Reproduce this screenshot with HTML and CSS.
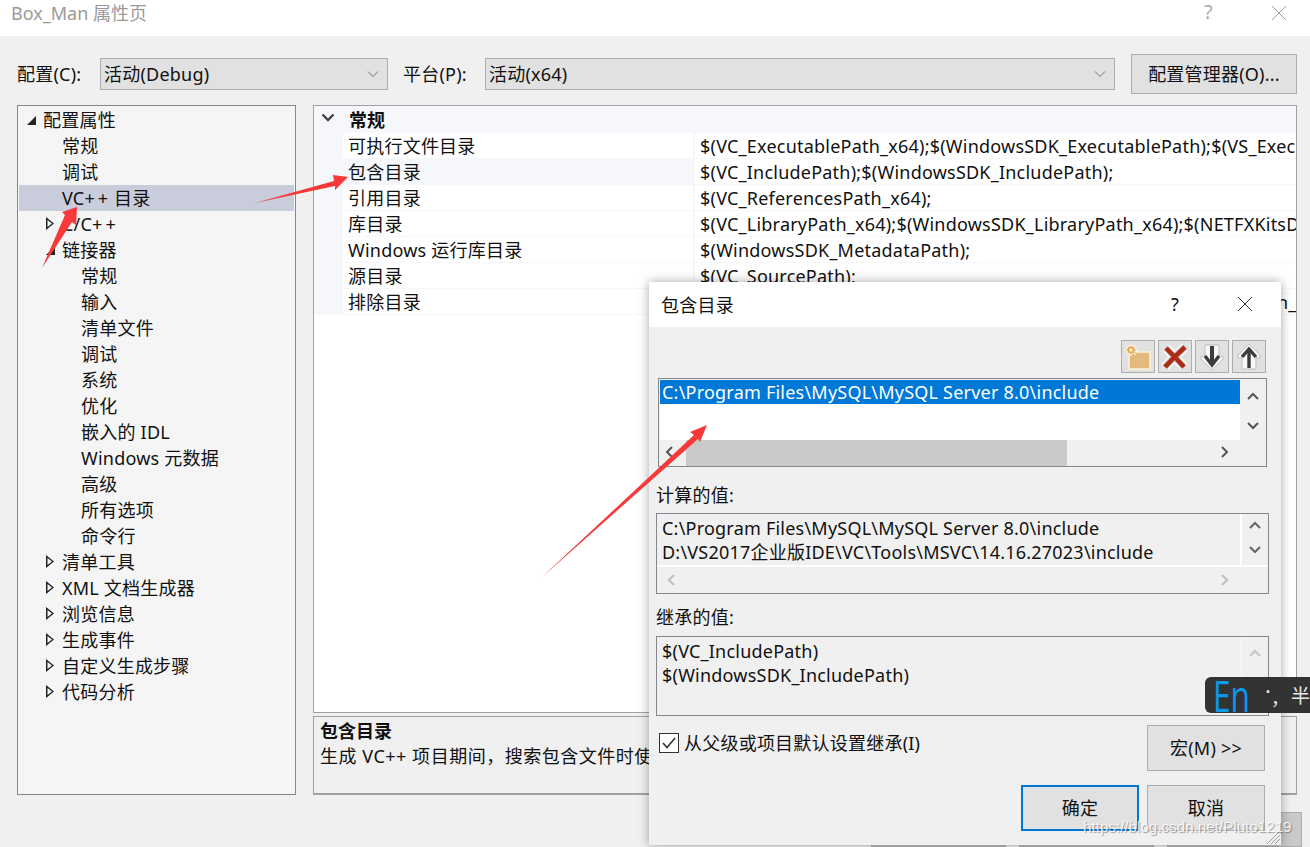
FILE: index.html
```html
<!DOCTYPE html>
<html lang="zh-CN">
<head>
<meta charset="utf-8">
<title>Box_Man 属性页</title>
<link rel="stylesheet" href="styles.css">
</head>
<body>
<div class="window">
  <header class="titlebar">
    <span class="title">Box_Man 属性页</span>
    <span class="help">?</span>
    <svg class="close" width="18" height="18" viewBox="0 0 18 18"><path d="M2 2 L16 16 M16 2 L2 16" stroke="#a0a0a0" fill="none"/></svg>
  </header>
  <div class="config">
    <span class="cfg-label first">配置(C):</span>
    <div class="select sel-a"><span>活动(Debug)</span><svg width="12" height="8" viewBox="0 0 12 8"><path d="M1 1.5 L6 6.5 L11 1.5" stroke="#777" fill="none"/></svg></div>
    <span class="cfg-label second">平台(P):</span>
    <div class="select sel-b"><span>活动(x64)</span><svg width="12" height="8" viewBox="0 0 12 8"><path d="M1 1.5 L6 6.5 L11 1.5" stroke="#777" fill="none"/></svg></div>
    <div class="btn cfg-btn">配置管理器(O)...</div>
  </div>
  <div class="main">
    <nav class="tree">
      <div class="node lvl0"><i class="tw open"></i>配置属性</div>
      <div class="node lvl1">常规</div>
      <div class="node lvl1">调试</div>
      <div class="node lvl1 sel">VC<span class="plus">++</span> 目录</div>
      <div class="node lvl1"><i class="tw closed"></i>C/C<span class="plus">++</span></div>
      <div class="node lvl1"><i class="tw open"></i>链接器</div>
      <div class="node lvl2">常规</div>
      <div class="node lvl2">输入</div>
      <div class="node lvl2">清单文件</div>
      <div class="node lvl2">调试</div>
      <div class="node lvl2">系统</div>
      <div class="node lvl2">优化</div>
      <div class="node lvl2">嵌入的 IDL</div>
      <div class="node lvl2">Windows 元数据</div>
      <div class="node lvl2">高级</div>
      <div class="node lvl2">所有选项</div>
      <div class="node lvl2">命令行</div>
      <div class="node lvl1"><i class="tw closed"></i>清单工具</div>
      <div class="node lvl1"><i class="tw closed"></i>XML 文档生成器</div>
      <div class="node lvl1"><i class="tw closed"></i>浏览信息</div>
      <div class="node lvl1"><i class="tw closed"></i>生成事件</div>
      <div class="node lvl1"><i class="tw closed"></i>自定义生成步骤</div>
      <div class="node lvl1"><i class="tw closed"></i>代码分析</div>
    </nav>
    <section class="right">
      <div class="grid">
        <div class="group">
          <svg class="chev" width="14" height="10" viewBox="0 0 14 10"><path d="M1.5 1.5 L7 7 L12.5 1.5" stroke="#444" stroke-width="2.4" fill="none"/></svg>
          <b>常规</b>
        </div>
        <div class="prop"><div class="pname">可执行文件目录</div><div class="pval">$(VC_ExecutablePath_x64);$(WindowsSDK_ExecutablePath);$(VS_ExecutablePath);$(MSBuild_ExecutablePath);</div></div>
        <div class="prop hover"><div class="pname">包含目录</div><div class="pval">$(VC_IncludePath);$(WindowsSDK_IncludePath);</div></div>
        <div class="prop"><div class="pname">引用目录</div><div class="pval">$(VC_ReferencesPath_x64);</div></div>
        <div class="prop"><div class="pname">库目录</div><div class="pval">$(VC_LibraryPath_x64);$(WindowsSDK_LibraryPath_x64);$(NETFXKitsDir)Lib\um\x64</div></div>
        <div class="prop"><div class="pname">Windows 运行库目录</div><div class="pval">$(WindowsSDK_MetadataPath);</div></div>
        <div class="prop"><div class="pname">源目录</div><div class="pval">$(VC_SourcePath);</div></div>
        <div class="prop"><div class="pname">排除目录</div><div class="pval">$(CommonExcludePath);$(VC_ExecutablePath_x64);$(VC_LibraryPath_x64);</div></div>
      </div>
      <div class="desc">
        <b>包含目录</b>
        <p>生成 VC++ 项目期间，搜索包含文件时使用的路径。</p>
      </div>
    </section>
  </div>
  <footer class="footer">
    <div class="foot-btn"></div>
    <div class="foot-btn"></div>
    <div class="foot-btn"></div>
  </footer>
</div>

<svg class="arrows" width="1310" height="847" viewBox="0 0 1310 847">
  <path fill="#f8393a" d="M255 203 L334 181 L333 175 L348 177 L335 190 L335 186 Z"/>
  <path fill="#f8393a" d="M42 268 L65 215 L62 212 L77 207 L76 225 L72 222 Z"/>
</svg>

<div class="dialog">
  <div class="dlg-title">
    <span>包含目录</span>
    <span class="dlg-help">?</span>
    <svg class="dlg-close" width="16" height="16" viewBox="0 0 16 16"><path d="M1 1 L15 15 M15 1 L1 15" stroke="#333" fill="none"/></svg>
  </div>
  <div class="dlg-body">
    <div class="tools">
      <div class="tool">
        <svg width="30" height="30" viewBox="0 0 30 30"><path d="M6 8 H12 L14 10 H27 V27 H6 Z" fill="#e3bb7e" stroke="#fdf3e0" stroke-width="1.5"/><path d="M8 2 L9.4 5 L12.5 3.5 L11.2 6.6 L14.5 8 L11.2 9.4 L12.5 12.5 L9.4 11 L8 14 L6.6 11 L3.5 12.5 L4.8 9.4 L1.5 8 L4.8 6.6 L3.5 3.5 L6.6 5 Z" fill="#e8a23a" stroke="#fff" stroke-width=".8"/><circle cx="8" cy="8" r="1.8" fill="#fff3d8"/></svg>
      </div>
      <div class="tool">
        <svg width="30" height="30" viewBox="0 0 30 30"><path d="M6 6 Q15 15 24 25 M25 5 Q14 15 5 25" stroke="#fff" stroke-width="9" fill="none"/><path d="M6 6 Q15 15 24 25 M25 5 Q14 15 5 25" stroke="#c8c8c8" stroke-width="6.5" fill="none"/><path d="M6 6 Q15 15 24 25 M25 5 Q14 15 5 25" stroke="#ad2a12" stroke-width="4.5" fill="none"/></svg>
      </div>
      <div class="tool">
        <svg width="30" height="30" viewBox="0 0 30 30"><path d="M8 3 H22 V14 H26 V17 L15 28 L4 17 V14 H8 Z" fill="#f8f8f8" stroke="#bdbdbd"/><path d="M15 4 V22" stroke="#3c3c3c" stroke-width="4" fill="none"/><path d="M8 14 L15 23 L22 14" stroke="#3c3c3c" stroke-width="3.4" fill="none"/></svg>
      </div>
      <div class="tool">
        <svg width="30" height="30" viewBox="0 0 30 30"><path d="M15 2 L26 13 V16 H22 V27 H8 V16 H4 V13 Z" fill="#f8f8f8" stroke="#bdbdbd"/><path d="M15 8 V26" stroke="#3c3c3c" stroke-width="3.4" fill="none"/><path d="M8 15 L15 7 L22 15" stroke="#3c3c3c" stroke-width="3.4" fill="none"/></svg>
      </div>
    </div>
    <div class="listbox">
      <div class="list-main">
        <div class="list-rows"><div class="list-sel">C:\Program Files\MySQL\MySQL Server 8.0\include</div></div>
        <div class="vbar">
          <svg width="14" height="10" viewBox="0 0 14 10"><path d="M2 8 L7 3 L12 8" stroke="#555" stroke-width="2" fill="none"/></svg>
          <svg width="14" height="10" viewBox="0 0 14 10"><path d="M2 2 L7 7 L12 2" stroke="#555" stroke-width="2" fill="none"/></svg>
        </div>
      </div>
      <div class="hbar">
        <svg class="hleft" width="10" height="14" viewBox="0 0 10 14"><path d="M8 2 L3 7 L8 12" stroke="#555" stroke-width="2" fill="none"/></svg>
        <div class="thumb"></div>
        <svg class="hright" width="10" height="14" viewBox="0 0 10 14"><path d="M2 2 L7 7 L2 12" stroke="#555" stroke-width="2" fill="none"/></svg>
      </div>
    </div>
    <div class="sec-label">计算的值:</div>
    <div class="valbox computed">
      <div class="val-main">
        <div class="val-text">C:\Program Files\MySQL\MySQL Server 8.0\include<br>D:\VS2017企业版IDE\VC\Tools\MSVC\14.16.27023\include</div>
        <div class="vbar small">
          <svg width="14" height="10" viewBox="0 0 14 10"><path d="M2 8 L7 3 L12 8" stroke="#666" stroke-width="2" fill="none"/></svg>
          <svg width="14" height="10" viewBox="0 0 14 10"><path d="M2 2 L7 7 L12 2" stroke="#666" stroke-width="2" fill="none"/></svg>
        </div>
      </div>
      <div class="hbar2">
        <svg width="10" height="14" viewBox="0 0 10 14"><path d="M8 2 L3 7 L8 12" stroke="#c4c4c4" stroke-width="2.4" fill="none"/></svg>
        <svg width="10" height="14" viewBox="0 0 10 14"><path d="M2 2 L7 7 L2 12" stroke="#c4c4c4" stroke-width="2.4" fill="none"/></svg>
      </div>
    </div>
    <div class="sec-label second-sec">继承的值:</div>
    <div class="valbox inherited">
      <div class="val-text">$(VC_IncludePath)<br>$(WindowsSDK_IncludePath)</div>
      <div class="vbar small single">
        <svg width="14" height="10" viewBox="0 0 14 10"><path d="M2 8 L7 3 L12 8" stroke="#c8c8c8" stroke-width="2.4" fill="none"/></svg>
      </div>
    </div>
    <div class="inherit-row">
      <label class="check">
        <svg class="cb" width="20" height="20" viewBox="0 0 20 20"><rect x="0.5" y="0.5" width="19" height="19" fill="#fff" stroke="#333"/><path d="M4 10 L8 14.5 L16 5" stroke="#333" stroke-width="1.6" fill="none"/></svg>
        <span class="check-text">从父级或项目默认设置继承(I)</span>
      </label>
      <div class="btn dlg-btn">宏(M) &gt;&gt;</div>
    </div>
    <div class="dlg-actions">
      <div class="btn dlg-btn primary">确定</div>
      <div class="btn dlg-btn">取消</div>
    </div>
  </div>
  <svg class="grip" width="14" height="14" viewBox="0 0 14 14"><path d="M14 1 L1 14 M14 5 L5 14 M14 9 L9 14" stroke="#9a9a9a" fill="none"/></svg>
</div>

<svg class="arrows" width="1310" height="847" viewBox="0 0 1310 847">
  <path fill="#f8393a" d="M541 578 L694 435 L690 432 L707 425 L700 442 L698 439 Z"/>
</svg>

<div class="ime"><span class="ime-en">En</span><span class="ime-dot">·</span><span class="ime-comma">，</span><span class="ime-half">半</span></div>
<div class="watermark">https://blog.csdn.net/Pluto1219</div>
</body>
</html>
```
FILE: styles.css
```css
* { box-sizing: border-box; }
html, body { margin: 0; padding: 0; }
body {
  width: 1310px;
  height: 847px;
  overflow: hidden;
  position: relative;
  font-family: "Noto Sans", "Noto Sans CJK SC", sans-serif;
  font-size: 18px;
  letter-spacing: .22px;
  color: #111;
  background: #f0f0f0;
}
.window { width: 1310px; height: 847px; display: flex; flex-direction: column; }

.titlebar { height: 36px; background: #fff; display: flex; align-items: center; padding: 0 0 0 11px; position: relative; flex: none; }
.title { font-size: 18px; letter-spacing: 0; color: #9a9a9a; flex: 1; margin-top: -13px; }
.help { color: #aaa; font-size: 20px; margin-right: 57px; margin-top: -13px; }
.close { margin-right: 22px; margin-top: -11px; }

.config { display: flex; align-items: center; padding: 18px 0 0 17px; flex: none; }
.cfg-label { line-height: 32px; }
.first { width: 83px; }
.second { width: 82px; margin-left: 15px; }
.select { height: 32px; line-height: 30px; background: #e1e1e1; border: 1px solid #adadad; display: flex; align-items: center; justify-content: space-between; padding: 0 8px 0 3px; }
.sel-a { width: 288px; }
.sel-b { width: 630px; }
.btn { background: #e1e1e1; border: 1px solid #adadad; display: flex; align-items: center; justify-content: center; line-height: 24px; }
.cfg-btn { width: 166px; height: 40px; margin-left: 16px; }

.main { display: flex; gap: 17px; padding: 11px 0 0 17px; flex: none; }
.tree { width: 279px; height: 690px; background: #f5f5f5; border: 1px solid #828790; padding: 1px; }
.node { height: 26px; line-height: 26px; position: relative; white-space: nowrap; }
.plus { letter-spacing: 3px; margin-right: -2px; }
.lvl0 { padding-left: 24px; }
.lvl1 { padding-left: 43px; }
.lvl2 { padding-left: 62px; }
.sel { background: #c9ccda; }
.tw { position: absolute; top: 8px; width: 0; height: 0; }
.lvl0 .tw { left: 8px; }
.lvl1 .tw { left: 27px; }
.tw.open { top: 9px; border-style: solid; border-width: 0 0 9px 9px; border-color: transparent transparent #222 transparent; }
.tw.closed { width: 8px; height: 13px; top: 6px; background: linear-gradient(#222, #222); clip-path: polygon(0 0, 100% 50%, 0 100%, 0 0, 1.5px 3px, 1.5px calc(100% - 3px), calc(100% - 2px) 50%, 1.5px 3px); }

.right { width: 984px; display: flex; flex-direction: column; gap: 3px; }
.grid { height: 608px; background: #fff; border: 1px solid #a0a0a0; overflow: hidden; }
.group { height: 27px; background: #f5f7fb; display: flex; align-items: center; padding: 0 0 2px 7px; }
.group b { margin-left: 14px; font-weight: 700; letter-spacing: 0; }
.chev { flex: none; margin-top: -2px; }
.prop { height: 26px; display: flex; border-left: 29px solid #f5f7fb; border-bottom: 1px solid #f5f7fb; }
.pname { width: 352px; flex: none; padding-left: 5px; line-height: 26px; border-right: 2px solid #f5f7fb; white-space: nowrap; }
.pval { padding-left: 5px; line-height: 26px; white-space: nowrap; overflow: hidden; flex: 1; }
.hover, .hover .pname { background: #f5f7fb; }
.hover .pval { background: #fff; }
.desc { height: 79px; background: #f0f0f0; border: 1px solid #a0a0a0; border-bottom-width: 2px; padding: 2px 6px; line-height: 25px; }
.desc b { display: block; font-weight: 700; letter-spacing: 0; }
.desc p { margin: 0; white-space: nowrap; overflow: hidden; letter-spacing: .52px; }

.footer { display: flex; gap: 13px; justify-content: flex-end; padding: 17px 8px 0 0; flex: 1; }
.foot-btn { width: 135px; background: #c9c9c9; border: 1px solid #adadad; }

.arrows { position: absolute; left: 0; top: 0; pointer-events: none; }

.dialog { position: absolute; left: 649px; top: 282px; width: 632px; height: 563px; background: #f0f0f0; box-shadow: 0 0 10px rgba(0,0,0,.35); display: flex; flex-direction: column; }
.dlg-title { height: 45px; background: #fff; display: flex; align-items: center; padding: 0 0 2px 12px; position: relative; flex: none; }
.dlg-title span:first-child { flex: 1; }
.dlg-help { margin-right: 58px; font-size: 18px; }
.dlg-close { margin-right: 28px; }
.dlg-body { padding: 13px 12px 0 7px; flex: 1; display: flex; flex-direction: column; }
.tools { display: flex; justify-content: flex-end; gap: 3px; padding-right: 3px; }
.tool { width: 34px; height: 33px; background: #e1e1e1; border: 1px solid #adadad; display: flex; align-items: center; justify-content: center; }
.listbox { width: 609px; height: 89px; margin: 5px 0 0 2px; border: 1px solid #828790; padding: 1px 0 0 1px; display: flex; flex-direction: column; background: #f0f0f0; }
.list-main { display: flex; height: 60px; }
.list-rows { width: 580px; background: #fff; }
.list-sel { height: 24px; line-height: 24px; background: #0078d7; color: #fff; padding-left: 2px; white-space: nowrap; }
.vbar { flex: 1; display: flex; flex-direction: column; align-items: center; justify-content: space-between; padding: 11px 0 9px; }
.hbar { flex: 1; display: flex; align-items: center; position: relative; padding-left: 26px; }
.hleft { position: absolute; left: 4px; top: 5px; }
.thumb { width: 381px; height: 100%; background: #cacaca; }
.hright { position: absolute; right: 36px; top: 5px; }
.sec-label { line-height: 24px; margin-top: 16px; }
.second-sec { margin-top: 11px; }
.valbox { width: 613px; border: 1px solid #828790; margin-top: 6px; background: #f0f0f0; }
.computed { height: 81px; display: flex; flex-direction: column; }
.val-main { display: flex; height: 53px; border-bottom: 2px solid #fff; }
.val-text { flex: 1; padding: 2px 0 0 5px; line-height: 24px; border-right: 2px solid #fff; white-space: nowrap; }
.vbar.small { width: 26px; flex: none; padding: 6px 0 10px; }
.hbar2 { flex: 1; display: flex; justify-content: space-between; align-items: center; padding: 0 38px 0 9px; }
.inherited { height: 80px; display: flex; margin-top: 7px; }
.inherited .val-text { border-right: 1px solid #fbfbfb; }
.vbar.single { justify-content: flex-start; padding-top: 11px; }
.inherit-row { display: flex; justify-content: space-between; align-items: flex-start; margin-top: 9px; padding: 0 4px 0 3px; }
.check { display: flex; align-items: center; gap: 5px; margin-top: 6px; line-height: 20px; }
.check-text { line-height: 22px; padding-top: 1px; }
.cb { flex: none; }
.dlg-btn { width: 118px; height: 46px; }
.dlg-actions { display: flex; justify-content: flex-end; gap: 8px; margin-top: 14px; padding-right: 4px; }
.primary { border: 2px solid #0078d7; }
.grip { position: absolute; right: 1px; bottom: 1px; }

.ime { position: absolute; left: 1205px; top: 677px; width: 105px; height: 36px; background: #333; border-radius: 6px 0 0 6px; display: flex; align-items: center; overflow: hidden; padding-left: 8px; white-space: nowrap; letter-spacing: 0; }
.ime-en { color: #0a97e8; font-size: 44px; line-height: 36px; font-family: "Open Sans", sans-serif; font-weight: 400; display: inline-block; width: 38px; transform: scaleX(.72); transform-origin: left center; }
.ime-dot { color: #e8e8e8; font-size: 22px; margin-left: 14px; margin-top: -10px; width: 8px; }
.ime-comma { color: #e8e8e8; font-size: 18px; width: 20px; margin-left: -2px; margin-top: 4px; }
.ime-half { color: #e8e8e8; font-size: 19px; }
.watermark { position: absolute; left: 1083px; top: 818px; font-family: "Liberation Sans", sans-serif; font-size: 15.2px; letter-spacing: 0; color: rgba(255,255,255,.85); text-shadow: 1px 1px 1px rgba(0,0,0,.35); white-space: nowrap; }
```
